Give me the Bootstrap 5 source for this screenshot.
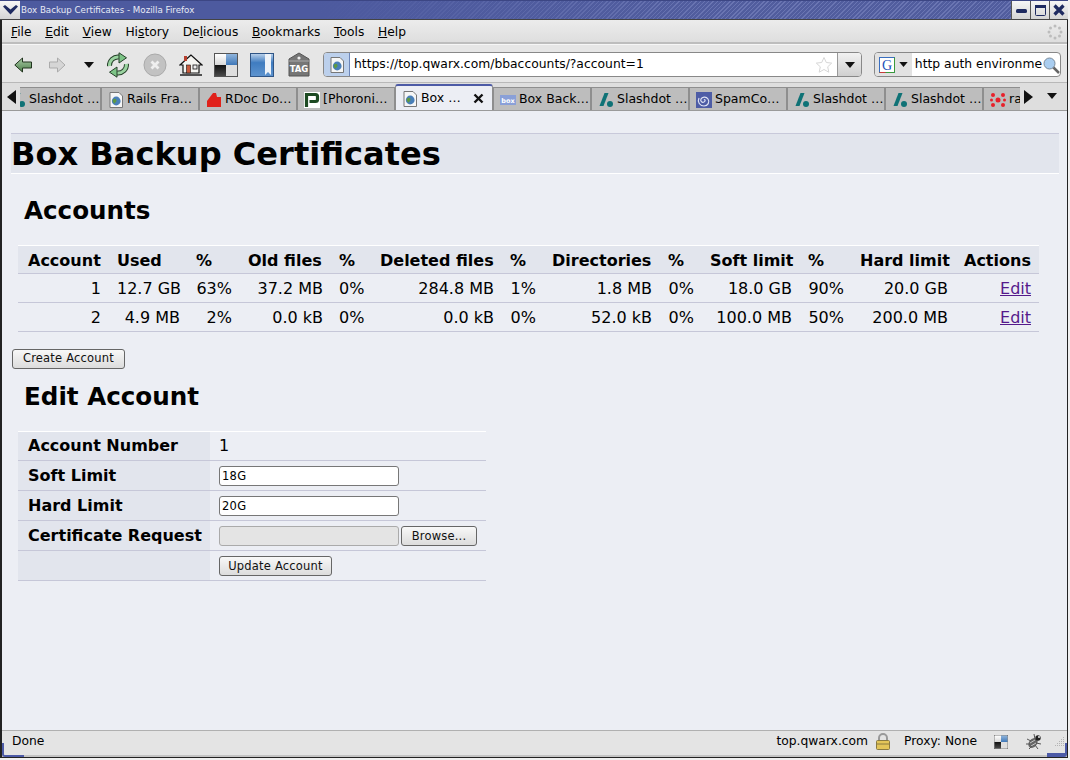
<!DOCTYPE html>
<html lang="en">
<head>
    <meta charset="UTF-8">
    <meta name="viewport" content="width=device-width, initial-scale=1.0">
    <title>Box Backup Certificates - Mozilla Firefox</title>
    <link href="https://cdn.jsdelivr.net/npm/bootstrap@5.3.0/dist/css/bootstrap.min.css" rel="stylesheet">
    <style>
        html, body { height: 100%; overflow: hidden; }
        body { font-family: "DejaVu Sans", sans-serif; background: #f0f0f0; color: #000; }
        .win-frame { height: 758px; width: 1068px; border-left: 2px solid #222; border-right: 1px solid #222; border-bottom: 1px solid #222; position: relative; background: #e4e4e4; }

        /* title bar */
        .title-row { height: 20px; margin: 0 -1px 0 -2px; flex: none; background: repeating-linear-gradient(135deg, #6a75b2 0 1px, #515d9e 1px 3px); border-top: 1px solid #3c4684; border-bottom: 1px solid #444; color: #e8eaf6; font-size: 8.7px; }
        .title-text { padding-left: 1px; line-height: 18px; background: linear-gradient(90deg, #4d5a9f 0, #4d5a9f 30%, transparent 70%); }
        .win-btn { width: 19px; background: linear-gradient(#f6f6f6, #d4d4d4); border-left: 1px solid #555; }
        .menu-btn { width: 20px; border-left: 0; }

        /* menu + toolbar */
        .menu-row { height: 24px; flex: none; padding: 2px 0 0 9px; gap: 13.7px; font-size: 12.25px; background: linear-gradient(#ececec, #dedede); border-bottom: 2px solid #bdbdbd; }
        .tool-row { height: 39px; flex: none; padding-top: 2px; background: #e6e6e6; border-top: 1px solid #f6f6f6; border-bottom: 1px solid #b8b8b8; }
        .tool-row > * { flex: none; }
        .ic-back { margin-left: 12px; }
        .ic-fwd { margin-left: 16px; }
        .ic-drop { margin-left: 18px; }
        .ic-reload { margin-left: 12px; }
        .ic-stop { margin-left: 13px; }
        .ic-home { margin-left: 12px; }
        .ic-cookie { margin-left: 11px; }
        .ic-mark { margin-left: 12px; }
        .ic-tag { margin-left: 14px; }
        .url-box { width: 539px; height: 25px; margin-left: 13px; background: #fff; border: 1px solid #888; border-radius: 4px; font-size: 12.35px; overflow: hidden; }
        .url-icon { width: 26px; height: 100%; background: #bcd0ec; border-right: 1px solid #6d86b8; }
        .url-drop { width: 24px; height: 100%; background: linear-gradient(#f2f2f2, #cfcfcf); border-left: 1px solid #999; }
        .search-box { width: 187px; height: 25px; margin-left: 12px; background: #fff; border: 1px solid #888; border-radius: 4px; font-size: 12.35px; overflow: hidden; }
        .search-engine { width: 38px; height: 100%; background: #e2e2e2; }
        .search-text { padding-left: 3px; }

        /* tabs */
        .tab-row { height: 28px; flex: none; background: #dedede; border-bottom: 1px solid #9a9a9a; }
        .tab-clip { width: 1000px; height: 26px; margin: 1px 0 0 4px; overflow: hidden; }
        .tab-item { width: 98px; height: 23px; margin-top: 3px; flex: none; padding: 1px 0 0 6px; gap: 3px; background: #bdbdbd; border: 1px solid #8e8e8e; border-bottom: 0; font-size: 12.5px; white-space: nowrap; overflow: hidden; }
        .tab-active { height: 26px; margin-top: 0; background: #eceef4; border-top: 2px solid #4c5aa6; border-radius: 3px 3px 0 0; }
        .tab-first { margin-left: -17px; }
        .tab-prev { margin: 7px 0 0 5px; }
        .tab-next { margin: 7px 0 0 4px; }
        .tab-list { margin: 10px 0 0 14px; }

        /* page */
        .page-area { flex: 1 1 auto; background: #eceef4; overflow: hidden; padding-top: 22px; }
        .page-title { margin: 0 8px 0 9px; height: 41px; font-size: 32.1px; line-height: 41px; font-weight: 700; background: #e2e5ed; border-top: 1px solid #c8c9da; border-bottom: 1px solid #fff; }
        .page-head { margin: 0 0 0 22px; font-size: 24.6px; font-weight: 700; line-height: 32px; }
        .accounts-head { margin-top: 21px; }
        .acct-table { margin: 18px 0 0 16px; width: 1021px; table-layout: fixed; font-size: 16px; border-collapse: collapse; }
        .acct-table > :not(caption) > * > * { padding: 1px 8px 0; background: transparent; box-shadow: none; color: #000; border-bottom: 1px solid #c6c7d8; height: 29px; vertical-align: middle; white-space: nowrap; }
        .acct-table > thead > tr > th { background: #e2e5ed; height: 28px; padding-top: 2px; border-top: 1px solid #fff; }
        .acct-table > thead > tr > th:first-child { padding-left: 10px; }
        .acct-table a { color: #551a8b; }
        .w-acct { width: 91px; }
        .w-used { width: 79px; }
        .w-pct { width: 52px; }
        .w-old { width: 91px; }
        .w-pct2 { width: 41px; }
        .w-del { width: 130px; }
        .w-pct3 { width: 42px; }
        .w-dir { width: 116px; }
        .w-soft { width: 98px; }
        .w-hard { width: 104px; }
        .w-act { width: 83px; }
        .form-table { margin: 0 0 0 16px; width: 468px; table-layout: fixed; font-size: 16px; }
        .form-table > :not(caption) > * > * { padding: 0 9px; background: transparent; box-shadow: none; color: #000; border-bottom: 1px solid #c6c7d8; height: 30px; vertical-align: middle; white-space: nowrap; }
        .form-table > tbody > tr:first-child > * { border-top: 1px solid #fff; height: 29px; }
        .form-table > tbody > tr:last-child > td { padding-bottom: 2px; }
        .form-table > tbody > tr > th { background: #e2e5ed; font-weight: 700; padding-left: 10px; }
        .w-label { width: 192px; }
        .w-field { width: 276px; }
        .old-btn { height: 20px; padding: 0; font-family: "DejaVu Sans", sans-serif; font-size: 11.5px; line-height: 17px; letter-spacing: .2px; color: #111; background: linear-gradient(#f8f8f8, #dcdcdc); border: 1px solid #666; border-radius: 3px; }
        .btn-wide { width: 113px; }
        .create-wrap { margin: 13px 0 0 10px; }
        .edit-head { margin-top: 12px; }
        .edit-wrap { margin-top: 18px; }
        .old-input { width: 180px; height: 20px; padding: 0 2px; font-family: "DejaVu Sans", sans-serif; font-size: 11.5px; letter-spacing: .3px; background: #fff; border: 1px solid #777; border-radius: 3px; vertical-align: middle; display: inline-block; }
        .old-input:disabled { background: #e4e4e4; border-color: #aaa; }
        .file-btn { margin-left: 2px; vertical-align: middle; width: 76px; }

        /* status bar */
        .status-row { height: 27px; flex: none; padding: 0 2px 3px 10px; font-size: 12.3px; background: #e4e4e4; border-top: 1px solid #b0b0b0; border-bottom: 2px solid #c4c4c4; }
        .st-lock { margin-left: 7px; }
        .st-proxy { margin-left: 13px; }
        .st-cookie { margin-left: 17px; }
        .st-bug { margin-left: 17px; margin-right: 12px; }
        .corner-left { position: absolute; left: 0; bottom: 0; width: 22px; height: 14px; border-left: 2px solid #4c5aa6; border-bottom: 2px solid #4c5aa6; border-bottom-left-radius: 3px; }
        .corner-right { position: absolute; right: 0; bottom: 0; width: 20px; height: 14px; border-right: 2px solid #4c5aa6; border-bottom: 4px solid #4c5aa6; border-bottom-right-radius: 3px; }
    </style>
</head>
<body class="m-0">
    <svg width="0" height="0" class="position-absolute">
        <defs>
            <symbol id="ico-page" viewBox="0 0 16 16">
                <path d="M2 .5h9l3.500 3.500v11.500H2z" fill="#f6f6f6" stroke="#777"/>
                <circle cx="8.200" cy="9" r="4.400" fill="#4a7fb8"/>
                <path d="M5 7.500c2-1.500 3.500-.5 3.500 1.300s-1.500 1.200-1.800 3c-1.400-1-2.500-2.800-1.700-4.300z" fill="#5e9a42"/>
            </symbol>
            <symbol id="ico-slash" viewBox="0 0 16 16">
                <path d="M6.500 1h4L5.500 14h-4z" fill="#0f7276"/>
                <circle cx="12" cy="12" r="3" fill="#0f7276"/>
            </symbol>
            <linearGradient id="ck-a" x1="0" y1="0" x2="0" y2="1"><stop offset="0" stop-color="#fff"/><stop offset="1" stop-color="#d8d8d8"/></linearGradient>
            <linearGradient id="ck-b" x1="0" y1="0" x2="0" y2="1"><stop offset="0" stop-color="#8fb4dc"/><stop offset="1" stop-color="#3f78b8"/></linearGradient>
            <linearGradient id="ck-c" x1="0" y1="0" x2="0" y2="1"><stop offset="0" stop-color="#111"/><stop offset="1" stop-color="#4a4a4a"/></linearGradient>
            <symbol id="ico-check" viewBox="0 0 24 24">
                <rect x=".5" y=".5" width="23" height="23" fill="#d8d8d8" stroke="#555"/>
                <rect x="1" y="1" width="11" height="11" fill="url(#ck-a)"/>
                <rect x="12" y="1" width="11" height="11" fill="url(#ck-b)"/>
                <rect x="1" y="12" width="11" height="11" fill="url(#ck-c)"/>
                <rect x="12" y="12" width="11" height="11" fill="#dedede"/>
            </symbol>
        </defs>
    </svg>

    <div class="win-frame d-flex flex-column">
        <div class="title-row d-flex align-items-stretch">
            <div class="win-btn menu-btn d-flex align-items-center justify-content-center">
                <svg width="15" height="10" viewBox="0 0 15 10"><path d="M0 1.500L2 0l5.500 4.500L13 0l2 1.500L7.500 9.500z" fill="#1e2a60"/></svg>
            </div>
            <div class="title-text flex-grow-1">Box Backup Certificates - Mozilla Firefox</div>
            <div class="win-btn d-flex align-items-center justify-content-center">
                <svg width="11" height="8" viewBox="0 0 11 8"><rect y="3" width="11" height="4" rx="1.500" fill="#1e2a60"/></svg>
            </div>
            <div class="win-btn d-flex align-items-center justify-content-center">
                <svg width="11" height="11" viewBox="0 0 11 11"><rect x=".5" y=".5" width="10" height="10" rx="1" fill="none" stroke="#1e2a60"/><rect width="11" height="3" fill="#1e2a60"/></svg>
            </div>
            <div class="win-btn d-flex align-items-center justify-content-center">
                <svg width="12" height="12" viewBox="0 0 12 12"><path d="M1.500 1.500l9 9M10.500 1.500l-9 9" stroke="#1e2a60" stroke-width="3.200"/></svg>
            </div>
        </div>

        <div class="menu-row d-flex align-items-center">
            <span><u>F</u>ile</span><span><u>E</u>dit</span><span><u>V</u>iew</span><span>Hi<u>s</u>tory</span><span>De<u>l</u>icious</span><span><u>B</u>ookmarks</span><span><u>T</u>ools</span><span><u>H</u>elp</span>
            <svg class="ms-auto me-1" width="16" height="16" viewBox="0 0 16 16"><g fill="#bcbcbc"><circle cx="8" cy="2" r="1.500"/><circle cx="12.500" cy="4" r="1.500"/><circle cx="14" cy="8" r="1.500"/><circle cx="12.500" cy="12" r="1.500"/><circle cx="8" cy="14" r="1.500"/><circle cx="3.500" cy="12" r="1.500"/><circle cx="2" cy="8" r="1.500"/><circle cx="3.500" cy="4" r="1.500"/></g></svg>
        </div>

        <div class="tool-row d-flex align-items-center">
            <svg class="ic-back" width="18" height="16" viewBox="0 0 18 16"><defs><linearGradient id="bk" x1="0" y1="0" x2="0" y2="1"><stop offset="0" stop-color="#a9cba6"/><stop offset="1" stop-color="#4d7f4b"/></linearGradient></defs><path d="M8.500 1v4h9v6h-9v4L.8 8z" fill="url(#bk)" stroke="#22341f"/></svg>
            <svg class="ic-fwd" width="18" height="16" viewBox="0 0 18 16"><path d="M9.500 1v4h-8v6h8v4L17 8z" fill="#d6d6d6" stroke="#ababab"/></svg>
            <svg class="ic-drop" width="10" height="6" viewBox="0 0 10 6"><path d="M0 0h10L5 6z" fill="#111"/></svg>
            <svg class="ic-reload" width="24" height="26" viewBox="0 0 24 26">
                <g fill="none" stroke="#26402a" stroke-width="5"><path d="M3.500 14A8.500 8.500 0 0 1 13 5"/><path d="M20.500 12A8.500 8.500 0 0 1 11 21"/></g>
                <g fill="none" stroke="#9ad3a0" stroke-width="3"><path d="M3.500 14A8.500 8.500 0 0 1 13 5"/><path d="M20.500 12A8.500 8.500 0 0 1 11 21"/></g>
                <path d="M13 .8l7.500 5L13 11z" fill="#7cc486" stroke="#26402a"/>
                <path d="M11 15l-7.500 5.200L11 25.200z" fill="#7cc486" stroke="#26402a"/>
            </svg>
            <svg class="ic-stop" width="24" height="24" viewBox="0 0 24 24"><circle cx="12" cy="12" r="11" fill="#c2c2c2" stroke="#aaa"/><path d="M8.500 8.500l7 7M15.500 8.500l-7 7" stroke="#efefef" stroke-width="2.800"/></svg>
            <svg class="ic-home" width="24" height="24" viewBox="0 0 24 24"><path d="M12 2L1 12h3v8h16v-8h3z" fill="#f4f4f0" stroke="#111" stroke-width="1.200"/><rect x="5" y="3" width="3" height="5" fill="#b5402f"/><rect x="7.500" y="12" width="4" height="8" fill="#c85a3c" stroke="#111" stroke-width=".6"/><rect x="14" y="12" width="4" height="4" fill="#eee" stroke="#111" stroke-width=".8"/><path d="M1 22h22" stroke="#111" stroke-width="1.400"/></svg>
            <svg class="ic-cookie" width="24" height="24"><use href="#ico-check"/></svg>
            <svg class="ic-mark" width="24" height="24" viewBox="0 0 24 24"><defs><linearGradient id="bm" x1="0" y1="0" x2="0" y2="1"><stop offset="0" stop-color="#bcd3ec"/><stop offset=".4" stop-color="#3f7cc0"/><stop offset="1" stop-color="#5e94cf"/></linearGradient></defs><rect x=".5" y=".5" width="23" height="23" fill="url(#bm)" stroke="#2f5586"/><path d="M15 1h6v21l-3-3-3 3z" fill="#edf2f8"/></svg>
            <svg class="ic-tag" width="22" height="25" viewBox="0 0 22 25"><path d="M11 1l10 6v17H1V7z" fill="#767676" stroke="#555"/><circle cx="11" cy="6" r="1.600" fill="#eee"/><path d="M1 9h20" stroke="#aaa"/><text x="11" y="20" text-anchor="middle" font-family="'DejaVu Sans', sans-serif" font-weight="700" font-size="8.500" fill="#fff">TAG</text></svg>
            <div class="url-box d-flex align-items-center">
                <div class="url-icon d-flex align-items-center justify-content-center"><svg width="16" height="16"><use href="#ico-page"/></svg></div>
                <div class="flex-grow-1 ps-1">https://top.qwarx.com/bbaccounts/?account=1</div>
                <svg class="me-1" width="18" height="18" viewBox="0 0 18 18"><path d="M9 1.500l2.300 5 5.400.6-4 3.700 1.100 5.400L9 13.500l-4.800 2.700 1.100-5.400-4-3.700 5.400-.6z" fill="#fff" stroke="#d6d6d6"/></svg>
                <div class="url-drop d-flex align-items-center justify-content-center"><svg width="10" height="6" viewBox="0 0 10 6"><path d="M0 0h10L5 6z" fill="#111"/></svg></div>
            </div>
            <div class="search-box d-flex align-items-center">
                <div class="search-engine d-flex align-items-center ps-1 gap-1">
                    <svg width="16" height="16" viewBox="0 0 16 16"><rect x=".5" y=".5" width="15" height="15" fill="#fff" stroke="#3a6fc0"/><path d="M.5 15.500h15V.5" fill="none" stroke="#3a9a3a"/><path d="M.5 15.500h6" stroke="#c83a3a"/><text x="8" y="13" text-anchor="middle" font-family="'Liberation Serif', serif" font-size="14" fill="#1c4fb8">G</text></svg>
                    <svg width="9" height="5" viewBox="0 0 10 6"><path d="M0 0h10L5 6z" fill="#111"/></svg>
                </div>
                <div class="search-text flex-grow-1 text-nowrap">http auth environme</div>
                <svg class="flex-shrink-0" width="18" height="18" viewBox="0 0 18 18"><path d="M11 11l6 6" stroke="#666" stroke-width="2.500"/><circle cx="7.500" cy="7.500" r="5.500" fill="#a9cdf0" stroke="#7a8a9a"/></svg>
            </div>
        </div>

        <div class="tab-row d-flex align-items-start">
            <svg class="tab-prev flex-shrink-0" width="9" height="14" viewBox="0 0 9 14"><path d="M9 0v14L0 7z" fill="#111"/></svg>
            <div class="tab-clip d-flex">
                <div class="tab-item tab-first d-flex align-items-center"><svg class="flex-shrink-0" width="16" height="16"><use href="#ico-slash"/></svg><span>Slashdot …</span></div>
                <div class="tab-item d-flex align-items-center"><svg class="flex-shrink-0" width="16" height="16"><use href="#ico-page"/></svg><span>Rails Fra…</span></div>
                <div class="tab-item d-flex align-items-center"><svg class="flex-shrink-0" width="16" height="16" viewBox="0 0 16 16"><path d="M1 15V9l6-8h3l1 4h4v10z" fill="#e0211a"/></svg><span>RDoc Do…</span></div>
                <div class="tab-item d-flex align-items-center"><svg class="flex-shrink-0" width="16" height="16" viewBox="0 0 16 16"><rect width="16" height="16" fill="#fff"/><path d="M2.500 15V2.500h9a2 2 0 0 1 2 2v3a2 2 0 0 1-2 2h-6" fill="none" stroke="#1d4a22" stroke-width="3.200"/></svg><span>[Phoroni…</span></div>
                <div class="tab-item tab-active d-flex align-items-center"><svg class="flex-shrink-0" width="16" height="16"><use href="#ico-page"/></svg><span class="flex-grow-1">Box …</span><svg class="me-2" width="11" height="11" viewBox="0 0 11 11"><path d="M1.500 1.500l8 8M9.500 1.500l-8 8" stroke="#111" stroke-width="2.400"/></svg></div>
                <div class="tab-item d-flex align-items-center"><svg class="flex-shrink-0" width="16" height="10" viewBox="0 0 16 10"><rect width="16" height="10" fill="#8aa0d8"/><text x="8" y="8" text-anchor="middle" font-family="'DejaVu Sans', sans-serif" font-weight="700" font-size="6.500" fill="#fff">box</text></svg><span>Box Back…</span></div>
                <div class="tab-item d-flex align-items-center"><svg class="flex-shrink-0" width="16" height="16"><use href="#ico-slash"/></svg><span>Slashdot …</span></div>
                <div class="tab-item d-flex align-items-center"><svg class="flex-shrink-0" width="16" height="16" viewBox="0 0 16 16"><rect width="16" height="16" fill="#4e5da6"/><path d="M8 8c1-1 2 1 0 2s-4-1-3-3 5-3 7 0 0 7-4 7-7-4-5-8" fill="none" stroke="#dfe3f4" stroke-width="1.200"/></svg><span>SpamCo…</span></div>
                <div class="tab-item d-flex align-items-center"><svg class="flex-shrink-0" width="16" height="16"><use href="#ico-slash"/></svg><span>Slashdot …</span></div>
                <div class="tab-item d-flex align-items-center"><svg class="flex-shrink-0" width="16" height="16"><use href="#ico-slash"/></svg><span>Slashdot …</span></div>
                <div class="tab-item d-flex align-items-center"><svg class="flex-shrink-0" width="16" height="16" viewBox="0 0 16 16"><g fill="#e8202a"><circle cx="8" cy="8" r="2.500"/><circle cx="3" cy="3" r="2"/><circle cx="13" cy="3" r="2"/><circle cx="3" cy="13" r="2"/><circle cx="13" cy="13" r="2"/><circle cx="1.500" cy="8" r="1.500"/><circle cx="14.500" cy="8" r="1.500"/></g></svg><span>ra</span></div>
            </div>
            <svg class="tab-next flex-shrink-0" width="9" height="14" viewBox="0 0 9 14"><path d="M0 0v14l9-7z" fill="#111"/></svg>
            <svg class="tab-list flex-shrink-0" width="10" height="6" viewBox="0 0 10 6"><path d="M0 0h10L5 6z" fill="#111"/></svg>
        </div>

        <div class="page-area">
            <h1 class="page-title">Box Backup Certificates</h1>
            <h2 class="page-head accounts-head">Accounts</h2>
            <table class="table acct-table mb-0">
                <colgroup>
                    <col class="w-acct"><col class="w-used"><col class="w-pct"><col class="w-old"><col class="w-pct2"><col class="w-del"><col class="w-pct3"><col class="w-dir"><col class="w-pct3"><col class="w-soft"><col class="w-pct"><col class="w-hard"><col class="w-act">
                </colgroup>
                <thead>
                    <tr>
                        <th>Account</th><th>Used</th><th>%</th><th>Old files</th><th>%</th><th>Deleted files</th><th>%</th><th>Directories</th><th>%</th><th>Soft limit</th><th>%</th><th>Hard limit</th><th>Actions</th>
                    </tr>
                </thead>
                <tbody>
                    <tr class="text-end">
                        <td>1</td><td>12.7 GB</td><td>63%</td><td>37.2 MB</td><td>0%</td><td>284.8 MB</td><td>1%</td><td>1.8 MB</td><td>0%</td><td>18.0 GB</td><td>90%</td><td>20.0 GB</td><td><a href="#">Edit</a></td>
                    </tr>
                    <tr class="text-end">
                        <td>2</td><td>4.9 MB</td><td>2%</td><td>0.0 kB</td><td>0%</td><td>0.0 kB</td><td>0%</td><td>52.0 kB</td><td>0%</td><td>100.0 MB</td><td>50%</td><td>200.0 MB</td><td><a href="#">Edit</a></td>
                    </tr>
                </tbody>
            </table>
            <div class="create-wrap"><button type="button" class="old-btn btn-wide">Create Account</button></div>
            <h2 class="page-head edit-head">Edit Account</h2>
            <div class="edit-wrap">
                <table class="table form-table mb-0">
                    <colgroup><col class="w-label"><col class="w-field"></colgroup>
                    <tbody>
                        <tr><th>Account Number</th><td>1</td></tr>
                        <tr><th>Soft Limit</th><td><input class="old-input" type="text" value="18G"></td></tr>
                        <tr><th>Hard Limit</th><td><input class="old-input" type="text" value="20G"></td></tr>
                        <tr><th>Certificate Request</th><td><input class="old-input" type="text" disabled><button type="button" class="old-btn file-btn">Browse...</button></td></tr>
                        <tr><th></th><td><button type="button" class="old-btn btn-wide">Update Account</button></td></tr>
                    </tbody>
                </table>
            </div>
        </div>

        <div class="status-row d-flex align-items-center">
            <span>Done</span>
            <span class="ms-auto">top.qwarx.com</span>
            <svg class="st-lock" width="16" height="17" viewBox="0 0 16 17"><path d="M4 8V5a4 4 0 0 1 8 0v3" fill="none" stroke="#9a9a9a" stroke-width="2"/><rect x="1.500" y="7.500" width="13" height="9" rx="1" fill="#e3c558" stroke="#8a7a40"/><path d="M2 11h12" stroke="#8a7a40"/></svg>
            <span class="st-proxy">Proxy: None</span>
            <svg class="st-cookie" width="14" height="14"><use href="#ico-check"/></svg>
            <svg class="st-bug" width="18" height="18" viewBox="0 0 18 18"><ellipse cx="8" cy="10" rx="4" ry="5.500" fill="#666" transform="rotate(40 8 10)"/><path d="M5 10l5-3M6 13l5-3" stroke="#ddd" stroke-width=".8"/><circle cx="13" cy="5" r="2.700" fill="#222"/><circle cx="14" cy="4" r=".9" fill="#fff"/><path d="M2 6l4 2M1 11l4 0M4 16l3-3M9 1l1 5M16 11l-5-1M13 16l-3-4" stroke="#555"/></svg>
            <svg width="10" height="10" viewBox="0 0 10 10"><g fill="#b4b4b4"><rect x="8" y="0" width="1" height="1"/><rect x="6" y="2" width="1" height="1"/><rect x="8" y="2" width="1" height="1"/><rect x="4" y="4" width="1" height="1"/><rect x="6" y="4" width="1" height="1"/><rect x="8" y="4" width="1" height="1"/><rect x="2" y="6" width="1" height="1"/><rect x="4" y="6" width="1" height="1"/><rect x="6" y="6" width="1" height="1"/><rect x="8" y="6" width="1" height="1"/><rect x="0" y="8" width="1" height="1"/><rect x="2" y="8" width="1" height="1"/><rect x="4" y="8" width="1" height="1"/><rect x="6" y="8" width="1" height="1"/><rect x="8" y="8" width="1" height="1"/></g></svg>
        </div>
        <div class="corner-left"></div>
        <div class="corner-right"></div>
    </div>
    <script src="https://cdn.jsdelivr.net/npm/bootstrap@5.3.0/dist/js/bootstrap.bundle.min.js"></script>
</body>
</html>
